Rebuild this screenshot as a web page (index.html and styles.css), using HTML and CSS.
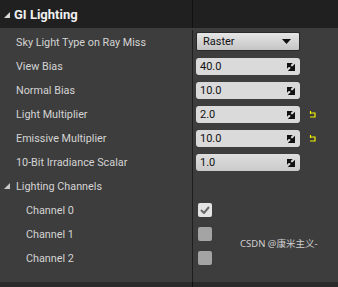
FILE: index.html
```html
<!DOCTYPE html>
<html>
<head>
<meta charset="utf-8">
<link rel="stylesheet" href="styles.css">
</head>
<body>
<div class="panel">
  <div class="header">
    <div class="hname">
      <svg class="tri" width="6" height="6" viewBox="0 0 6 6"><polygon points="6,0 6,6 0,6" fill="#d8d8d8"/></svg>
      <span>GI Lighting</span>
    </div>
    <div class="hval"></div>
  </div>
  <div class="rows">
    <div class="row">
      <div class="name">Sky Light Type on Ray Miss</div>
      <div class="val">
        <div class="combo"><span>Raster</span>
          <svg width="9" height="5" viewBox="0 0 9 5"><polygon points="0,0 9,0 4.5,5" fill="#111"/></svg>
        </div>
      </div>
    </div>
    <div class="row">
      <div class="name">View Bias</div>
      <div class="val"><div class="num"><span>40.0</span><svg class="spin" width="8" height="8" viewBox="0 0 8 8"><path d="M0 0H4.5L0 4.5Z M8 8H2L8 2Z M1 1L7 7" fill="#111" stroke="#111" stroke-width="1.8"/></svg></div></div>
    </div>
    <div class="row">
      <div class="name">Normal Bias</div>
      <div class="val"><div class="num"><span>10.0</span><svg class="spin" width="8" height="8" viewBox="0 0 8 8"><path d="M0 0H4.5L0 4.5Z M8 8H2L8 2Z M1 1L7 7" fill="#111" stroke="#111" stroke-width="1.8"/></svg></div></div>
    </div>
    <div class="row">
      <div class="name">Light Multiplier</div>
      <div class="val"><div class="num"><span>2.0</span><svg class="spin" width="8" height="8" viewBox="0 0 8 8"><path d="M0 0H4.5L0 4.5Z M8 8H2L8 2Z M1 1L7 7" fill="#111" stroke="#111" stroke-width="1.8"/></svg></div>
        <svg class="reset" width="7" height="7" viewBox="0 0 7 7"><path d="M1.5 0V3 M1 2H6V6H1" fill="none" stroke="#f2f200" stroke-width="1.2"/></svg>
      </div>
    </div>
    <div class="row">
      <div class="name">Emissive Multiplier</div>
      <div class="val"><div class="num"><span>10.0</span><svg class="spin" width="8" height="8" viewBox="0 0 8 8"><path d="M0 0H4.5L0 4.5Z M8 8H2L8 2Z M1 1L7 7" fill="#111" stroke="#111" stroke-width="1.8"/></svg></div>
        <svg class="reset" width="7" height="7" viewBox="0 0 7 7"><path d="M1.5 0V3 M1 2H6V6H1" fill="none" stroke="#f2f200" stroke-width="1.2"/></svg>
      </div>
    </div>
    <div class="row">
      <div class="name">10-Bit Irradiance Scalar</div>
      <div class="val"><div class="num grad"><span>1.0</span><svg class="spin" width="8" height="8" viewBox="0 0 8 8"><path d="M0 0H4.5L0 4.5Z M8 8H2L8 2Z M1 1L7 7" fill="#111" stroke="#111" stroke-width="1.8"/></svg></div></div>
    </div>
    <div class="row">
      <div class="name group">
        <svg class="tri" width="6" height="6" viewBox="0 0 6 6"><polygon points="6,0 6,6 0,6" fill="#c8c8c8"/></svg>
        <span>Lighting Channels</span>
      </div>
      <div class="val"></div>
    </div>
    <div class="row">
      <div class="name sub">Channel 0</div>
      <div class="val"><div class="check on"><svg width="10" height="8" viewBox="0 0 10 8"><path d="M1 4L4 7L9 1" fill="none" stroke="#6a6a6a" stroke-width="2"/></svg></div></div>
    </div>
    <div class="row">
      <div class="name sub">Channel 1</div>
      <div class="val"><div class="check"></div></div>
    </div>
    <div class="row">
      <div class="name sub">Channel 2</div>
      <div class="val"><div class="check"></div></div>
    </div>
    <div class="row filler">
      <div class="name"></div>
      <div class="val"></div>
    </div>
  </div>
  <div class="footer">
    <div class="fname"></div>
    <div class="fval"></div>
  </div>
  <div class="watermark">CSDN @康米主义-</div>
</div>
</body>
</html>
```
FILE: styles.css
```css
html, body {
  margin: 0;
  padding: 0;
}
body {
  width: 338px;
  height: 287px;
  overflow: hidden;
  background: #3d3d3d;
  font-family: Roboto, "Noto Sans CJK SC", sans-serif;
  color: #d6d6d6;
}
.panel {
  position: relative;
  display: flex;
  flex-direction: column;
  height: 287px;
}
.header {
  display: grid;
  grid-template-columns: 192px 1fr;
  height: 28px;
  background: #202020;
}
.hname {
  display: flex;
  align-items: center;
  gap: 4px;
  padding-left: 4px;
  font-weight: bold;
  font-size: 13px;
  color: #f0f0f0;
}
.hname .tri {
  margin-top: 2px;
}
.hval {
  border-left: 1px solid #111;
}
.rows {
  flex: 1;
  display: flex;
  flex-direction: column;
  padding-top: 2px;
}
.row {
  display: grid;
  grid-template-columns: 192px 1fr;
  height: 24px;
}
.row.filler {
  flex: 1;
}
.name {
  display: flex;
  align-items: center;
  padding-left: 16px;
  font-size: 10.8px;
  color: #d4d4d4;
}
.name.group {
  padding-left: 4px;
  gap: 6px;
}
.name.sub {
  padding-left: 26px;
}
.val {
  border-left: 1px solid #1e1e1e;
  display: flex;
  align-items: center;
  padding-left: 3px;
  gap: 9px;
}
.combo {
  width: 104px;
  height: 19px;
  box-sizing: border-box;
  border: 1px solid #2a2a2a;
  border-radius: 2px;
  background: linear-gradient(#e6e6e6, #c4c4c4);
  display: flex;
  align-items: center;
  justify-content: space-between;
  padding: 0 8px 0 6px;
  font-size: 11px;
  color: #111;
  margin-top: -1px;
}
.num {
  width: 104px;
  height: 17px;
  box-sizing: border-box;
  border-radius: 3px;
  background: #dadada;
  display: flex;
  align-items: center;
  justify-content: space-between;
  padding: 0 5px 0 4px;
  font-size: 11px;
  color: #111;
  margin-top: 1px;
}
.num.grad {
  background: linear-gradient(#dedede, #cacaca);
}
.reset {
  margin-top: 1px;
}
.check {
  width: 14px;
  height: 14px;
  box-sizing: border-box;
  border-radius: 2px;
  background: #a4a4a4;
  margin-left: 2px;
  display: flex;
  align-items: center;
  justify-content: center;
}
.check.on {
  background: #e4e4e4;
}
.footer {
  display: grid;
  grid-template-columns: 192px 1fr;
  height: 5px;
  background: #2a2a2a;
}
.fval {
  border-left: 1px solid #111;
}
.watermark {
  position: absolute;
  left: 240px;
  top: 236px;
  font-size: 9.5px;
  color: #cfcfcf;
  font-family: "Noto Sans", "Noto Sans CJK SC", sans-serif;
}
```
